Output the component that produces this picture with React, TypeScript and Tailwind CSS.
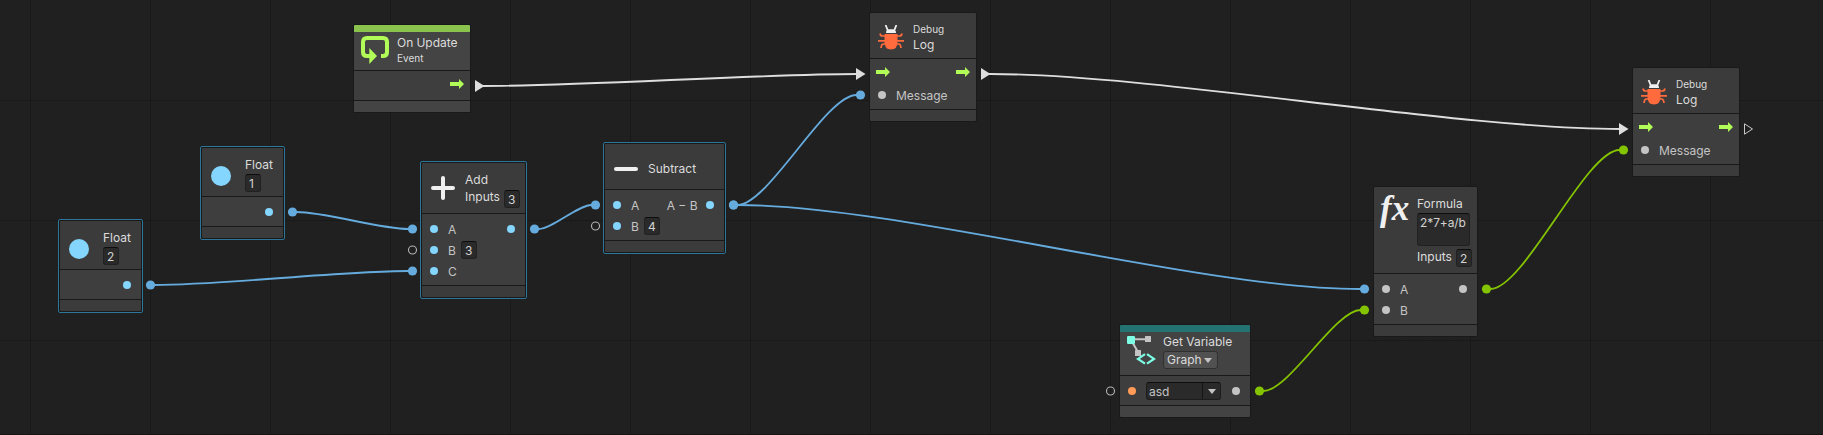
import type { ReactNode } from "react";

/* ---------- icons ---------- */

function FlowArrow() {
  return (
    <svg width="14" height="10" viewBox="0 0 14 10" className="block shrink-0">
      <path d="M0 3H9V0L14 5L9 10V7H0Z" fill="#b2fc57" />
    </svg>
  );
}

function UpdateIcon() {
  return (
    <svg width="28" height="28" viewBox="0 0 28 28" className="block shrink-0">
      <path d="M20 20H22Q26 20 26 16V6Q26 2 22 2H6Q2 2 2 6V16Q2 20 6 20H9" fill="none" stroke="#b2fc57" strokeWidth="4" />
      <path d="M8.3 12L16 20L8.3 28Z" fill="#b2fc57" />
    </svg>
  );
}

function BugIcon() {
  return (
    <svg width="26" height="25" viewBox="0 0 26 25" className="block shrink-0">
      <path d="M8 8Q8 4.6 10.5 4.2H15.5Q18 4.6 18 8Z" fill="#f0f0f0" />
      <path d="M7.6 0L9.6 5M18.4 0L16.4 5" stroke="#f0f0f0" strokeWidth="1.8" fill="none" />
      <path d="M6.5 9H19.5V17Q19.5 24.5 13 24.5Q6.5 24.5 6.5 17Z" fill="#ff6b3d" />
      <path
        d="M7 11H4.5Q2.5 11 2 8.5M7 15.8H0M7.5 19H5Q3.3 19.5 3 23M19 11H21.5Q23.5 11 24 8.5M19 15.8H26M18.5 19H21Q22.7 19.5 23 23"
        stroke="#ff6b3d"
        strokeWidth="1.7"
        fill="none"
      />
    </svg>
  );
}

function PlusIcon() {
  return (
    <svg width="24" height="24" viewBox="0 0 24 24" className="block shrink-0">
      <path d="M2 12H22M12 2V22" stroke="#f0f0f0" strokeWidth="4" strokeLinecap="round" />
    </svg>
  );
}

function MinusIcon() {
  return (
    <svg width="24" height="4" viewBox="0 0 24 4" className="block shrink-0">
      <path d="M2 2H22" stroke="#f0f0f0" strokeWidth="4" strokeLinecap="round" />
    </svg>
  );
}

function VariableIcon() {
  return (
    <svg width="30" height="30" viewBox="0 0 30 30" className="block shrink-0">
      <path d="M5 4.3H20M4 5L11 17" stroke="#c4c4c4" strokeWidth="2" fill="none" />
      <rect x="18" y="1" width="6" height="6" rx="0.5" fill="#c4c4c4" />
      <rect x="8" y="15" width="6" height="6" rx="0.5" fill="#c4c4c4" />
      <rect x="0" y="1" width="8" height="8" rx="1.2" fill="#7dffe6" />
      <path d="M18 19.2L11 23.9L18 28.6M20 19.2L27 23.9L20 28.6" stroke="#7dffe6" strokeWidth="2.2" fill="none" />
    </svg>
  );
}

function Caret() {
  return (
    <svg width="8" height="5" viewBox="0 0 8 5" className="block shrink-0">
      <path d="M0 0H8L4 5Z" fill="#c4c4c4" />
    </svg>
  );
}

/* ---------- building blocks ---------- */

function Dot({ color }: { color: string }) {
  return <span className={`block size-2 shrink-0 rounded-full ${color}`} />;
}

function Field({ children, className = "" }: { children: ReactNode; className?: string }) {
  return (
    <span
      className={`block h-[18px] w-4 shrink-0 rounded-[3px] border border-[#212121] border-t-[#0d0d0d] bg-[#2a2a2a] pl-[3px] leading-[17px] text-[#d2d2d2] ${className}`}
    >
      {children}
    </span>
  );
}

type NodeProps = {
  place: string;
  selected?: boolean;
  band?: string;
  tone?: string;
  header: ReactNode;
  headerClass: string;
  children: ReactNode;
  bodyClass: string;
};

function Node({ place, selected, band, tone = "bg-[#3b3b3b]", header, headerClass, children, bodyClass }: NodeProps) {
  const inner = (
    <div className="overflow-hidden rounded-[2px] border border-[#191919] bg-[#191919]">
      {band && <div className={`h-[7px] ${band}`} />}
      <div className={`flex items-start ${tone} ${headerClass}`}>{header}</div>
      <div className={`mt-px bg-[#3e3e3e] text-[#c4c4c4] ${bodyClass}`}>{children}</div>
      <div className={`mt-px h-[11px] ${tone}`} />
    </div>
  );
  return (
    <section className={`absolute ${place}`}>
      {selected ? <div className="rounded-[2px] border border-[#2d7599]">{inner}</div> : inner}
    </section>
  );
}

function PortRow({ children }: { children: ReactNode }) {
  return <div className="flex h-[21px] items-center">{children}</div>;
}

function FloatNode({ place, value }: { place: string; value: string }) {
  return (
    <Node
      place={place}
      selected
      headerClass="h-12"
      bodyClass="h-[29px] pt-[4.5px]"
      header={
        <>
          <span className="ml-[9px] mt-[18px] block size-5 rounded-full bg-[#84d6ff]" />
          <div className="ml-[14px] mt-[9px]">
            <div className="h-[17px] leading-4">Float</div>
            <Field>{value}</Field>
          </div>
        </>
      }
    >
      <PortRow>
        <span className="ml-auto mr-[10.5px]">
          <Dot color="bg-[#84d6ff]" />
        </span>
      </PortRow>
    </Node>
  );
}

function DebugLogNode({ place }: { place: string }) {
  return (
    <Node
      place={place}
      headerClass="h-[45px]"
      bodyClass="h-[50px]"
      header={
        <>
          <span className="ml-2 mt-3">
            <BugIcon />
          </span>
          <div className="ml-[9px] mt-[9px]">
            <div className="text-[10px] leading-[14px]">Debug</div>
            <div className="mt-[1px] leading-4">Log</div>
          </div>
        </>
      }
    >
      <div className="flex h-[25.5px] items-center justify-between px-[6px] pt-[0.5px]">
        <FlowArrow />
        <FlowArrow />
      </div>
      <PortRow>
        <span className="ml-2">
          <Dot color="bg-[#c4c4c4]" />
        </span>
        <span className="ml-[10px] pt-px">Message</span>
      </PortRow>
    </Node>
  );
}

/* ---------- wires ---------- */

type Wire = { from: [number, number]; to: [number, number]; color: string };

const BLUE = "#66abde";
const GREEN = "#84c300";
const WHITE = "#dedede";

const wires: Wire[] = [
  { from: [480, 86], to: [861, 74], color: WHITE },
  { from: [986, 74], to: [1624, 129], color: WHITE },
  { from: [292.5, 212], to: [412.5, 229], color: BLUE },
  { from: [150.5, 285], to: [412.5, 271], color: BLUE },
  { from: [534.5, 229], to: [595.5, 205], color: BLUE },
  { from: [733.5, 205], to: [860.5, 95], color: BLUE },
  { from: [733.5, 205], to: [1364.5, 289], color: BLUE },
  { from: [1259.5, 391], to: [1364.5, 310], color: GREEN },
  { from: [1486.5, 289], to: [1623.5, 150], color: GREEN },
];

const flowTips: [number, number][] = [
  [475, 86],
  [856, 74],
  [981, 74],
  [1619, 129],
];

const openPorts: [number, number][] = [
  [412.5, 250],
  [595.5, 226],
  [1110.5, 391],
];

// Straight stub at each end of a wire before it starts to bend.
const LEAD = 4;

function wirePath({ from: [x1, y1], to: [x2, y2] }: Wire) {
  const a = x1 + LEAD;
  const b = x2 - LEAD;
  const reach = (b - a) * 0.26;
  return `M${x1} ${y1}H${a}C${a + reach} ${y1} ${b - reach} ${y2} ${b} ${y2}H${x2}`;
}

function Wires() {
  return (
    <svg width="1823" height="435" viewBox="0 0 1823 435" className="absolute left-0 top-0">
      {wires.map((w, i) => (
        <path key={i} d={wirePath(w)} fill="none" stroke={w.color} strokeWidth="1.8" />
      ))}
      {wires
        .filter((w) => w.color !== WHITE)
        .map((w, i) => (
          <g key={i} fill={w.color}>
            <circle cx={w.from[0]} cy={w.from[1]} r="4.6" />
            <circle cx={w.to[0]} cy={w.to[1]} r="4.6" />
          </g>
        ))}
      {flowTips.map(([x, y]) => (
        <path key={x} d={`M${x} ${y - 6}L${x + 9.5} ${y}L${x} ${y + 6}Z`} fill={WHITE} />
      ))}
      {openPorts.map(([x, y]) => (
        <circle key={x} cx={x} cy={y} r="4" fill="none" stroke="#b4b4b4" strokeWidth="1.1" />
      ))}
      <path d="M1744.5 123.8L1752.5 129L1744.5 134.2Z" fill="none" stroke="#c8c8c8" strokeWidth="1" />
    </svg>
  );
}

/* ---------- graph ---------- */

export default function App() {
  return (
    <main className="relative h-[435px] w-[1823px] overflow-hidden whitespace-nowrap bg-[#202020] font-['Inter',sans-serif] text-[12px] text-[#dcdcdc]">
      <div className="absolute inset-0 bg-[linear-gradient(90deg,#1f1f1f_1px,transparent_1px),linear-gradient(#1f1f1f_1px,transparent_1px)] bg-[length:12px_12px] bg-position-[6px_4px]" />
      <div className="absolute inset-0 bg-[linear-gradient(90deg,#191919_1px,transparent_1px),linear-gradient(#191919_1px,transparent_1px)] bg-[length:120px_120px] bg-position-[30px_100px]" />
      <div className="absolute inset-x-0 bottom-0 h-px bg-[#191516]" />
      <Wires />

      <Node
        place="left-[353px] top-[24px] w-[118px]"
        band="bg-[#8bc34f]"
        tone="bg-[#444444]"
        headerClass="h-[38px]"
        bodyClass="h-[29px] pt-[2.5px]"
        header={
          <>
            <span className="ml-[7px] mt-1">
              <UpdateIcon />
            </span>
            <div className="ml-2 mt-[3px]">
              <div className="leading-4 tracking-[-0.05px]">On Update</div>
              <div className="text-[10px] leading-[14px]">Event</div>
            </div>
          </>
        }
      >
        <PortRow>
          <span className="ml-auto mr-[6px]">
            <FlowArrow />
          </span>
        </PortRow>
      </Node>

      <DebugLogNode place="left-[869px] top-[12px] w-[108px]" />
      <DebugLogNode place="left-[1632px] top-[67px] w-[108px]" />
      <FloatNode place="left-[200px] top-[146px] w-[85px]" value="1" />
      <FloatNode place="left-[58px] top-[219px] w-[85px]" value="2" />

      <Node
        place="left-[420px] top-[161px] w-[107px]"
        selected
        headerClass="h-[50px]"
        bodyClass="h-[71px] pt-[4.5px]"
        header={
          <>
            <span className="ml-[9px] mt-[13px]">
              <PlusIcon />
            </span>
            <div className="ml-[10px] mt-[9px]">
              <div className="leading-4">Add</div>
              <div className="flex">
                <span className="w-[39px] pt-px leading-4">Inputs</span>
                <Field className="mt-0.5">3</Field>
              </div>
            </div>
          </>
        }
      >
        <PortRow>
          <span className="ml-2">
            <Dot color="bg-[#84d6ff]" />
          </span>
          <span className="ml-[10px] pt-px">A</span>
          <span className="ml-auto mr-[10px]">
            <Dot color="bg-[#84d6ff]" />
          </span>
        </PortRow>
        <PortRow>
          <span className="ml-2">
            <Dot color="bg-[#84d6ff]" />
          </span>
          <span className="ml-[10px] w-[13px] pt-px">B</span>
          <Field>3</Field>
        </PortRow>
        <PortRow>
          <span className="ml-2">
            <Dot color="bg-[#84d6ff]" />
          </span>
          <span className="ml-[10px] pt-px">C</span>
        </PortRow>
      </Node>

      <Node
        place="left-[603px] top-[142px] w-[123px]"
        selected
        headerClass="h-[45px]"
        bodyClass="h-[50px] pt-[4.5px]"
        header={
          <>
            <span className="ml-[9px] mt-[23px]">
              <MinusIcon />
            </span>
            <div className="ml-[10px] mt-[17px] leading-4">Subtract</div>
          </>
        }
      >
        <PortRow>
          <span className="ml-2">
            <Dot color="bg-[#84d6ff]" />
          </span>
          <span className="ml-[10px] pt-px">A</span>
          <span className="ml-auto pt-px">A − B</span>
          <span className="ml-2 mr-[10.5px]">
            <Dot color="bg-[#84d6ff]" />
          </span>
        </PortRow>
        <PortRow>
          <span className="ml-2">
            <Dot color="bg-[#84d6ff]" />
          </span>
          <span className="ml-[10px] w-[13px] pt-px">B</span>
          <Field>4</Field>
        </PortRow>
      </Node>

      <Node
        place="left-[1119px] top-[324px] w-[132px]"
        band="bg-[#237373]"
        tone="bg-[#434343]"
        headerClass="h-[43px]"
        bodyClass="h-[29px] pt-[4.5px]"
        header={
          <>
            <span className="ml-[7px] mt-[3px]">
              <VariableIcon />
            </span>
            <div className="ml-[6px] mt-[2px]">
              <div className="h-[17px] leading-4">Get Variable</div>
              <div className="flex h-[18px] w-[55px] items-center justify-between rounded-[3px] border border-[#303030] bg-[#515151] pl-[3px] pr-[5px] leading-4">
                <span>Graph</span>
                <Caret />
              </div>
            </div>
          </>
        }
      >
        <PortRow>
          <span className="ml-2">
            <Dot color="bg-[#ff9a57]" />
          </span>
          <span className="ml-[10px] flex h-[18px] w-[75px] rounded-[3px] border border-[#1c1c1c] border-t-[#0d0d0d] bg-[#2a2a2a]">
            <span className="w-[56px] border-r border-[#151515] pl-[2px] leading-[17px]">asd</span>
            <span className="flex flex-1 items-center justify-center">
              <Caret />
            </span>
          </span>
          <span className="ml-auto mr-[10.5px]">
            <Dot color="bg-[#c4c4c4]" />
          </span>
        </PortRow>
      </Node>

      <Node
        place="left-[1373px] top-[186px] w-[105px]"
        headerClass="h-[86px]"
        bodyClass="h-[50px] pt-[4.5px]"
        header={
          <>
            <span className="ml-[6px] mt-1 w-[37px] shrink-0 font-['Liberation_Serif',serif] text-[35px] font-bold italic leading-[36px] text-[#f0f0f0]">
              fx
            </span>
            <div className="mt-[9px]">
              <div className="h-[17px] leading-4">Formula</div>
              <div className="h-[33px] w-[53px] rounded-[3px] border border-[#212121] border-t-[#0d0d0d] bg-[#2a2a2a] pl-[2px] pt-px leading-4 tracking-[-0.1px] text-[#d2d2d2]">
                2*7+a/b
              </div>
              <div className="flex pt-[3px]">
                <span className="w-[39px] leading-4">Inputs</span>
                <Field>2</Field>
              </div>
            </div>
          </>
        }
      >
        <PortRow>
          <span className="ml-2">
            <Dot color="bg-[#c4c4c4]" />
          </span>
          <span className="ml-[10px] pt-px">A</span>
          <span className="ml-auto mr-[10.5px]">
            <Dot color="bg-[#c4c4c4]" />
          </span>
        </PortRow>
        <PortRow>
          <span className="ml-2">
            <Dot color="bg-[#c4c4c4]" />
          </span>
          <span className="ml-[10px] pt-px">B</span>
        </PortRow>
      </Node>
    </main>
  );
}
